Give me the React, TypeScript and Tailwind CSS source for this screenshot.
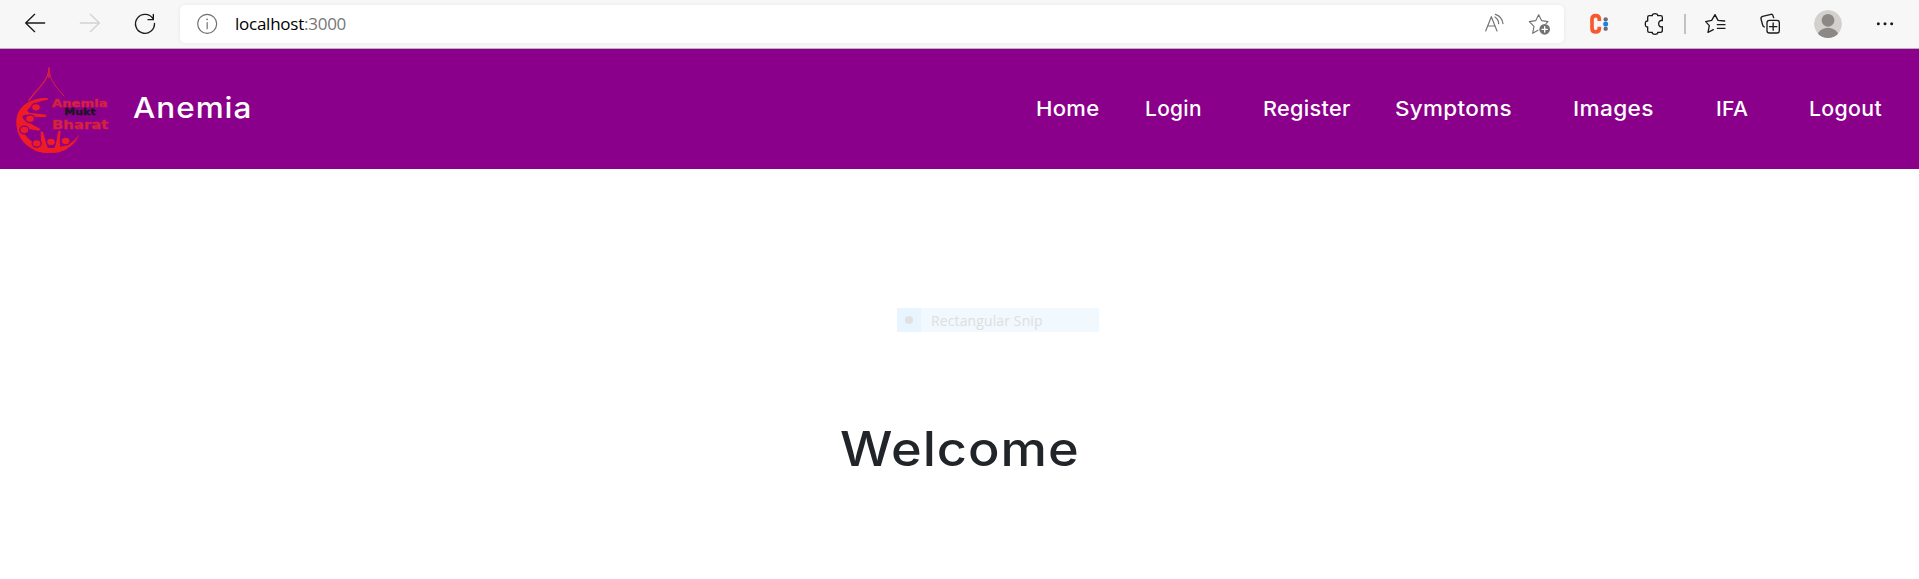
import React from "react";

type IconProps = { x: number; w: number; className?: string; children: React.ReactNode };

/* Toolbar glyphs share one 144-unit-high strip, drawn at a third of that size. */
function Icon({ x, w, className = "", children }: IconProps) {
  return (
    <svg
      width={w}
      height={48}
      viewBox={`${x} 0 ${w * 3} 144`}
      fill="none"
      stroke="#1b1b1b"
      strokeWidth={4}
      strokeLinecap="round"
      strokeLinejoin="round"
      className={`shrink-0 ${className}`}
    >
      {children}
    </svg>
  );
}

function BrowserBar() {
  return (
    <div className="flex h-[49px] items-start border-b border-[#b4b4b4] bg-[#f7f7f7]">
      <Icon x={60} w={30} className="ml-5">
        <path d="M134 69H77M104 43L77 69l27 26" />
      </Icon>
      <Icon x={225} w={30} className="ml-[25px]">
        <path stroke="#d2d2d2" d="M241 69h57M271 43l27 26-27 26" />
      </Icon>
      <Icon x={390} w={30} className="ml-[25px]">
        <path d="M459 56A28.500 28.500 0 1 0 463.500 70M460 43v16h-16" />
      </Icon>
      <div className="ml-[20px] mt-[5px] flex h-[38px] w-[1384px] items-center rounded-[5px] bg-white shadow-[0_0_4px_rgba(0,0,0,0.07)]">
        <Icon x={580} w={28} className="ml-[13px]">
          <g stroke="#6e6e6e" strokeWidth={3.5}>
            <circle cx="622.500" cy="71.500" r="28.500" />
            <path d="M622.500 68v18" />
            <circle cx="622.500" cy="58" r="1" />
          </g>
        </Icon>
        <div className="ml-[14px] font-['Open_Sans','Noto_Sans',sans-serif] text-[17px] leading-[24px] tracking-[-0.25px] text-black">
          localhost<span className="text-[#767676]">:3000</span>
        </div>
        <Icon x={63} w={30} className="ml-auto">
          <g stroke="#737373" strokeWidth={3.5}>
            <path d="M77 93l17-43 17 43M83 78h22M105 51q11 7 11 20M106 43q19 5 23 28" />
          </g>
        </Icon>
        <Icon x={198} w={30} className="ml-[15px] mr-[8px]">
          <path
            stroke="#737373"
            strokeWidth={3.5}
            d="M234 91l-16 9 4-21-14-14 19-3 9-18 9 18 19 3-6 6"
          />
          <circle cx="254" cy="88" r="16" fill="#737373" stroke="none" />
          <path stroke="#fff" d="M254 80v16M246 88h16" />
        </Icon>
      </div>
      <Icon x={381} w={28} className="ml-[23px]">
        <path
          stroke="#f9572d"
          strokeWidth={11}
          strokeLinecap="butt"
          d="M418 63v-5q0-11-11-11t-11 11v27q0 11 11 11t11-11v-5"
        />
        <g stroke="none">
          <circle cx="437" cy="58" r="6.500" fill="#6c6c72" />
          <circle cx="437" cy="72" r="7.500" fill="#1683e6" />
          <circle cx="437" cy="86" r="6.500" fill="#6c6c72" />
        </g>
      </Icon>
      <Icon x={546} w={28} className="ml-[27px]">
        <path d="M563 52q0-5 5-5h9c-1-5 4-6 8-6s9 1 8 6h9q5 0 5 5v10c-7-2-11 3-11 9s4 11 11 9v11q0 6-5 6h-9c1 5-4 6-8 6s-9-1-8-6h-9q-5 0-5-5v-11c-6 1-7-4-7-9s1-10 7-9z" />
      </Icon>
      <div className="ml-[14px] mt-[14px] h-5 w-[2px] shrink-0 bg-[#c2c2c2]" />
      <Icon x={726} w={28} className="ml-4">
        <path d="M760 89l-16 8 4-20-11-12 18-4 10-17 9 17 20 2M772 74h23M772 85h23" />
      </Icon>
      <Icon x={891} w={28} className="ml-[27px]">
        <rect x="921" y="61" width="37" height="38" rx="7" />
        <path d="M939.500 69v22M928.500 80h22M913 81q-4-2-5-6l-5-18q-1-6 5-8l25-6q5-1 6 4l2 6" />
      </Icon>
      <Icon x={1056} w={32} className="ml-[27px]">
        <clipPath id="avatar">
          <circle cx="1104" cy="72" r="42" />
        </clipPath>
        <g stroke="none" clipPath="url(#avatar)">
          <circle cx="1104" cy="72" r="42" fill="#d3d1ce" />
          <circle cx="1104" cy="61" r="19" fill="#8b8885" />
          <ellipse cx="1104" cy="109" rx="32" ry="26" fill="#8b8885" />
        </g>
      </Icon>
      <Icon x={1242} w={24} className="ml-[30px]">
        <g fill="#1b1b1b" stroke="none">
          <circle cx="1255" cy="71" r="4.500" />
          <circle cx="1275" cy="71" r="4.500" />
          <circle cx="1295" cy="71" r="4.500" />
        </g>
      </Icon>
    </div>
  );
}

const heads = [
  [78, 142],
  [60, 176],
  [43, 210],
  [80, 250],
  [123, 246],
  [167, 243],
];

function Logo() {
  return (
    <svg width={105} height={100} viewBox="0 -3 315 300" className="ml-[10px] shrink-0">
      <g fill="none" stroke="#d7223f" strokeLinecap="round">
        <path strokeWidth="4" d="M117 24C117 62 78 90 56 122" />
        <path strokeWidth="3" d="M117 24C118 64 142 84 162 108" />
        <path strokeWidth="5" d="M117 34v18" />
      </g>
      <g fill="#ee1c25">
        <path d="M113 114C72 112 19 132 19 187C19 242 63 279 117 279C162 279 196 258 208 222C192 248 168 262 125 264C78 262 36 232 33 190C36 160 68 122 113 120Z" />
        <path d="M40 138L58 158L109 164L108 171C80 173 50 168 24 160Z" />
        <path d="M24 160L46 182L90 206L88 212C58 207 36 203 20 194Z" />
        <path d="M92 214L99 216L106 240L118 279L94 277Z" />
        <path d="M145 212L152 213L149 238L152 276L130 279L140 240Z" />
        <path d="M60 262L100 265L104 279L80 274Z" />
        <path d="M140 262L180 258L165 271L140 277Z" />
      </g>
      <g fill="#ee1c25" stroke="#8b008b" strokeWidth="4">
        {heads.map(([cx, cy]) => (
          <ellipse key={cx} cx={cx} cy={cy} rx="13.500" ry="11.500" />
        ))}
      </g>
      <g fontFamily="'DejaVu Sans', sans-serif" fontWeight="700">
        <text x="126" y="141" fontSize="32" textLength="167" lengthAdjust="spacingAndGlyphs" fill="#d5223f" stroke="#d5223f">
          Anemia
        </text>
        <text x="163" y="166" fontSize="26" textLength="94" lengthAdjust="spacingAndGlyphs" fill="#1f1326" stroke="#1f1326">
          Mukt
        </text>
        <text x="126" y="206" fontSize="38" textLength="169" lengthAdjust="spacingAndGlyphs" fill="#d5223f" stroke="#d5223f">
          Bharat
        </text>
      </g>
    </svg>
  );
}

const links = [
  { label: "Home", cell: "w-[109px]", word: "scale-x-[1.075]" },
  { label: "Login", cell: "w-[118px]", word: "scale-x-[1.02]" },
  { label: "Register", cell: "w-[132px]", word: "scale-x-[1.055]" },
  { label: "Symptoms", cell: "w-[178px]", word: "scale-x-[1.095]" },
  { label: "Images", cell: "w-[143px]", word: "scale-x-[1.105]" },
  { label: "IFA", cell: "w-[93px]", word: "scale-x-[1.03]" },
  { label: "Logout", cell: "w-[110px]", word: "scale-x-[1.04]" },
];

export default function App() {
  return (
    <div className="h-[579px] overflow-hidden bg-white font-['Inter',sans-serif]">
      <BrowserBar />
      <header className="flex h-[120px] items-center bg-[#8b008b] font-medium text-white">
        <Logo />
        <a className="mb-[3px] ml-[18px] origin-left scale-x-[1.085] text-[29px] leading-[40px] tracking-[0.9px]">
          Anemia
        </a>
        <nav className="ml-auto flex text-[20.5px] leading-[30px] tracking-[0.3px]">
          {links.map((l) => (
            <a key={l.label} className={`shrink-0 whitespace-nowrap ${l.cell}`}>
              <span className={`inline-block origin-left ${l.word}`}>{l.label}</span>
            </a>
          ))}
        </nav>
      </header>
      <main className="flex flex-col items-center">
        <div className="ml-[77px] mt-[139px] flex h-[24px] w-[202px] items-center bg-[#f1f8fe] font-['Open_Sans','Noto_Sans',sans-serif] text-[14px] tracking-[0.12px] text-[#dedede]">
          <div className="flex h-6 w-6 items-center justify-center bg-[#e8f4fe]">
            <span className="h-2 w-2 rounded-full bg-[#e1e1e1]" />
          </div>
          <span className="ml-[10px]">Rectangular Snip</span>
        </div>
        <h1 className="mt-[87px] scale-x-[1.09] text-[48px] font-medium leading-[60px] tracking-[0.9px] text-[#212529]">
          Welcome
        </h1>
      </main>
    </div>
  );
}
